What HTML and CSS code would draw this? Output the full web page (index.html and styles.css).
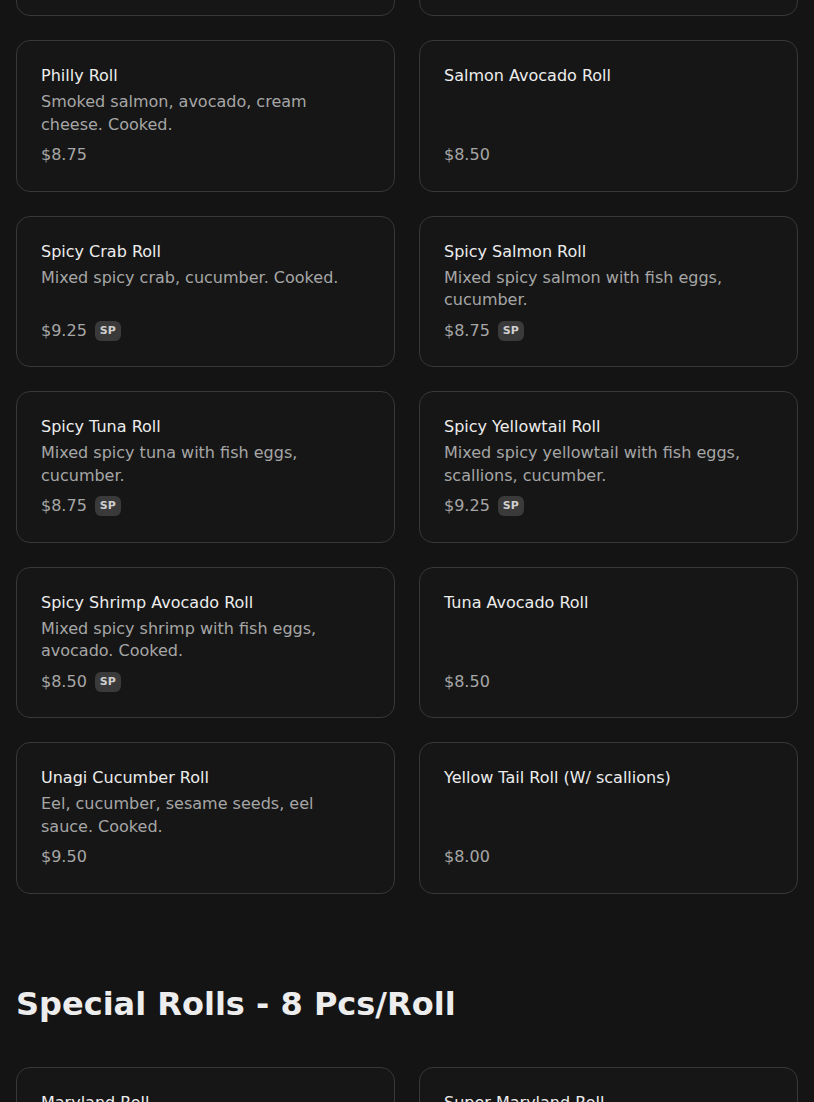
FILE: index.html
```html
<!DOCTYPE html>
<html lang="en">
<head>
<meta charset="utf-8">
<title>Menu</title>
<link rel="stylesheet" href="styles.css">
</head>
<body>
<main class="page">
  <section class="section">
    <div class="grid">
      <div class="card card-stub"></div>
      <div class="card card-stub"></div>
      <div class="card">
        <div class="name">Philly Roll</div>
        <div class="desc">Smoked salmon, avocado, cream cheese. Cooked.</div>
        <div class="price-row"><span class="price">$8.75</span></div>
      </div>
      <div class="card">
        <div class="name">Salmon Avocado Roll</div>
        <div class="desc"></div>
        <div class="price-row"><span class="price">$8.50</span></div>
      </div>
      <div class="card">
        <div class="name">Spicy Crab Roll</div>
        <div class="desc">Mixed spicy crab, cucumber. Cooked.</div>
        <div class="price-row"><span class="price">$9.25</span><span class="badge">SP</span></div>
      </div>
      <div class="card">
        <div class="name">Spicy Salmon Roll</div>
        <div class="desc">Mixed spicy salmon with fish eggs, cucumber.</div>
        <div class="price-row"><span class="price">$8.75</span><span class="badge">SP</span></div>
      </div>
      <div class="card">
        <div class="name">Spicy Tuna Roll</div>
        <div class="desc">Mixed spicy tuna with fish eggs, cucumber.</div>
        <div class="price-row"><span class="price">$8.75</span><span class="badge">SP</span></div>
      </div>
      <div class="card">
        <div class="name">Spicy Yellowtail Roll</div>
        <div class="desc">Mixed spicy yellowtail with fish eggs, scallions, cucumber.</div>
        <div class="price-row"><span class="price">$9.25</span><span class="badge">SP</span></div>
      </div>
      <div class="card">
        <div class="name">Spicy Shrimp Avocado Roll</div>
        <div class="desc">Mixed spicy shrimp with fish eggs, avocado. Cooked.</div>
        <div class="price-row"><span class="price">$8.50</span><span class="badge">SP</span></div>
      </div>
      <div class="card">
        <div class="name">Tuna Avocado Roll</div>
        <div class="desc"></div>
        <div class="price-row"><span class="price">$8.50</span></div>
      </div>
      <div class="card">
        <div class="name">Unagi Cucumber Roll</div>
        <div class="desc">Eel, cucumber, sesame seeds, eel sauce. Cooked.</div>
        <div class="price-row"><span class="price">$9.50</span></div>
      </div>
      <div class="card">
        <div class="name">Yellow Tail Roll (W/ scallions)</div>
        <div class="desc"></div>
        <div class="price-row"><span class="price">$8.00</span></div>
      </div>
    </div>
  </section>

  <section class="section">
    <h2 class="section-title">Special Rolls - 8 Pcs/Roll</h2>
    <div class="grid">
      <div class="card">
        <div class="name">Maryland Roll</div>
        <div class="desc">Crab meat, avocado, cucumber.</div>
        <div class="price-row"><span class="price">$12.95</span></div>
      </div>
      <div class="card">
        <div class="name">Super Maryland Roll</div>
        <div class="desc">Crab meat, avocado, cucumber, topped with crab.</div>
        <div class="price-row"><span class="price">$14.95</span></div>
      </div>
    </div>
  </section>
</main>
</body>
</html>
```

FILE: styles.css
```css
html, body {
  margin: 0;
  padding: 0;
  background: #141414;
}

body {
  font-family: "DejaVu Sans", "Liberation Sans", sans-serif;
  color: #ededed;
}

.page {
  padding: 0 16px;
  margin-top: -136px;
}

.section {
  padding-bottom: 64px;
}

.section-title {
  margin: 27px 0 44px;
  font-size: 32px;
  line-height: 1.2;
  font-weight: 700;
  color: #ededed;
}

.grid {
  display: grid;
  grid-template-columns: 1fr 1fr;
  gap: 24px;
}

.card {
  display: flex;
  flex-direction: column;
  padding: 24px;
  border: 1px solid #383838;
  border-radius: 14px;
  background: #161616;
}

.card-stub {
  min-height: 102px;
}

.name {
  font-size: 16px;
  line-height: 22px;
  color: #ededed;
}

.desc {
  margin-top: 4px;
  font-size: 16px;
  line-height: 22.5px;
  color: #a6a6a6;
  min-height: 45px;
}

.price-row {
  margin-top: auto;
  padding-top: 8px;
  display: flex;
  align-items: center;
  gap: 8px;
}

.price {
  font-size: 16px;
  line-height: 22.5px;
  color: #a6a6a6;
}

.badge {
  display: inline-block;
  padding: 3px 5px;
  font-size: 11px;
  line-height: 14px;
  font-weight: 700;
  color: #cfcfcf;
  background: #3a3a3a;
  border-radius: 6px;
}
```
